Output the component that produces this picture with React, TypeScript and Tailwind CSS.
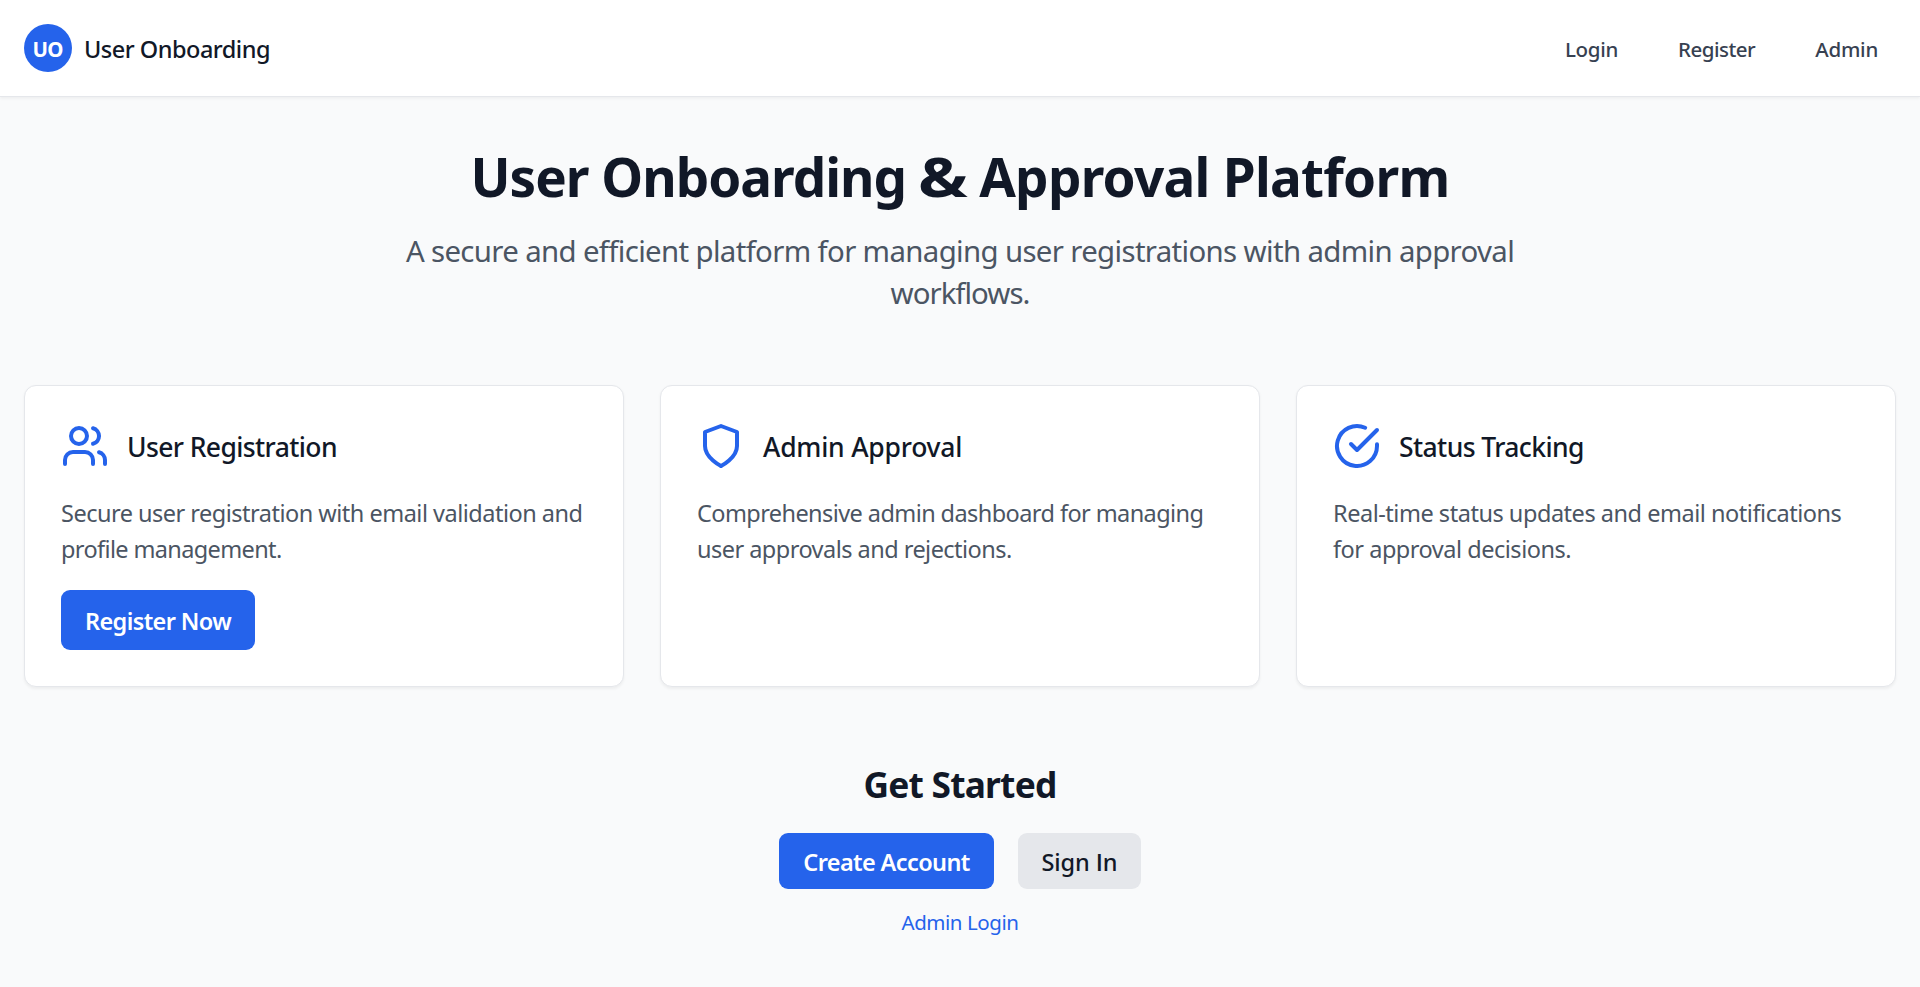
import React from "react";
import type { ReactNode } from "react";

function Icon({ children }: { children: ReactNode }) {
  return (
    <svg viewBox="0 0 24 24" fill="none" stroke="currentColor" strokeWidth="2" strokeLinecap="round" strokeLinejoin="round" className="size-12 shrink-0">
      {children}
    </svg>
  );
}

function Card({ icon, title, lines, children }: { icon: ReactNode; title: ReactNode; lines: ReactNode; children?: ReactNode }) {
  return (
    <section className="rounded-[12px] border border-[#e5e7eb] bg-white p-9 shadow-[0_1.5px_3px_rgba(0,0,0,0.05)]">
      <div className="mb-6 flex h-12 items-center gap-[18px] text-[#2563eb]">
        <Icon>{icon}</Icon>
        <h3 className="pt-[2px] text-[26.5px] leading-[42px] font-medium text-[#111827]">{title}</h3>
      </div>
      <p className="-mb-px pt-px text-[23.5px] leading-9 whitespace-nowrap text-[#4b5563]">{lines}</p>
      {children}
    </section>
  );
}

export default function App() {
  return (
    <div className="min-h-[987px] bg-[#f9fafb] font-['Noto_Sans','Open_Sans',sans-serif] text-[#111827]">
      <header className="flex h-[97px] items-center justify-between border-b border-[#e5e7eb] bg-white px-6 shadow-[0_1.5px_3px_rgba(0,0,0,0.05)]">
        <div className="flex items-center gap-3">
          <div className="flex size-12 items-center justify-center rounded-full bg-[#2563eb] pt-[2px] pr-px text-[20.5px] font-bold tracking-[-0.8px] text-white">UO</div>
          <span className="pt-[2px] text-[23.5px] leading-9 font-medium tracking-[-0.5px]">User Onboarding</span>
        </div>
        <nav className="flex gap-[60px] px-[18px] pt-[2px] text-[20.5px] leading-[30px] font-medium text-[#374151]">
          <a className="tracking-[-0.28px]">Login</a>
          <a className="tracking-[-0.5px]">Register</a>
          <a className="tracking-[-0.25px]">Admin</a>
        </nav>
      </header>

      <main className="px-6 pt-12">
        <div className="text-center">
          <h1 className="mb-[22px] pt-[2px] text-[53px] leading-[60px] font-bold tracking-[-0.71px]">
            <span className="tracking-[-1px]">User Onboarding</span> <span className="mx-1 inline-block scale-x-[1.25]">&amp;</span> Approval Platform
          </h1>
          <p className="mx-auto max-w-[1152px] pt-px text-[29.4px] leading-[42px] tracking-[-0.65px] text-[#4b5563]">
            A secure and efficient platform for managing user registrations with admin approval <span className="tracking-[-0.97px]">workflows.</span>
          </p>
        </div>

        <div className="mt-[71px] grid grid-cols-3 gap-9">
          <Card
            icon={
              <>
                <path d="M16 21v-2a4 4 0 0 0-4-4H6a4 4 0 0 0-4 4v2" />
                <circle cx="9" cy="7" r="4" />
                <path d="M22 21v-2a4 4 0 0 0-3-3.87" />
                <path d="M16 3.13a4 4 0 0 1 0 7.75" />
              </>
            }
            title={<span className="tracking-[-0.61px]">User Registration</span>}
            lines={<><span className="tracking-[-0.505px]">Secure user registration with email validation and</span><br /><span className="tracking-[-0.63px]">profile management.</span></>}
          >
            <button className="mt-6 flex h-[60px] w-[194px] items-center justify-center rounded-[9px] bg-[#2563eb] pt-[3px] text-[23.5px] font-semibold tracking-[-0.62px] text-white">Register Now</button>
          </Card>
          <Card
            icon={<path d="M12 22s8-4 8-10V5l-8-3-8 3v7c0 6 8 10 8 10" />}
            title={<span className="tracking-[-0.23px]">Admin Approval</span>}
            lines={<><span className="tracking-[-0.58px]">Comprehensive admin dashboard for managing</span><br /><span className="tracking-[-0.53px]">user approvals and rejections.</span></>}
          />
          <Card
            icon={
              <>
                <path d="M22 11.08V12a10 10 0 1 1-5.93-9.14" />
                <path d="m9 11 3 3L22 4" />
              </>
            }
            title={<span className="tracking-[-0.6px]">Status Tracking</span>}
            lines={<><span className="tracking-[-0.47px]">Real-time status updates and email notifications</span><br /><span className="tracking-[-0.48px]">for approval decisions.</span></>}
          />
        </div>

        <div className="mt-[73px] flex flex-col items-center">
          <h2 className="text-[35.3px] leading-[48px] font-bold tracking-[-0.78px]">Get Started</h2>
          <div className="mt-[25px] flex gap-6 text-[23.5px] font-semibold">
            <a className="flex h-[55.5px] w-[215px] items-center justify-center rounded-[9px] bg-[#2563eb] pt-1 tracking-[-0.61px] text-white">Create Account</a>
            <a className="flex h-[55.5px] w-[123px] items-center justify-center rounded-[9px] bg-[#e5e7eb] pt-1 font-medium whitespace-pre tracking-[-0.1px]">Sign <span className="font-['Open_Sans',sans-serif] font-semibold">I</span>n</a>
          </div>
          <a className="mt-[18px] text-[20.5px] leading-[30px] tracking-[-0.44px] text-[#2563eb]">Admin Login</a>
        </div>
      </main>
    </div>
  );
}
